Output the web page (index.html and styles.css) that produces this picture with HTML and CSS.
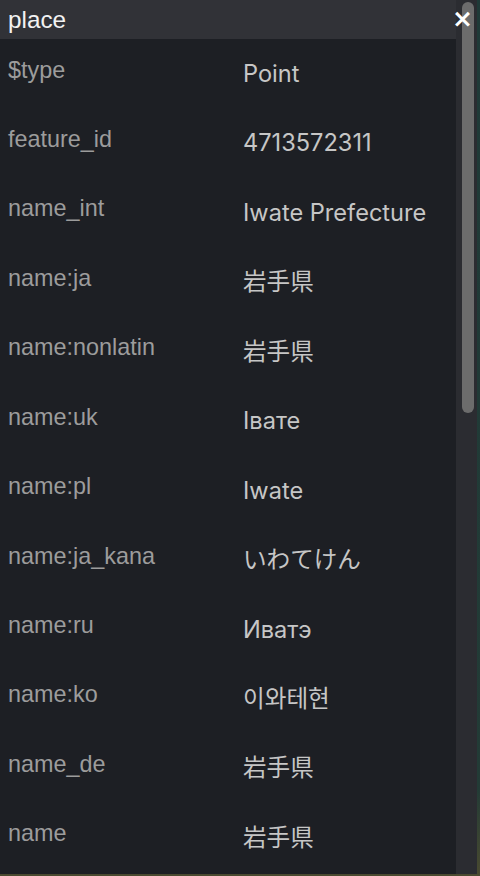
FILE: index.html
```html
<!DOCTYPE html>
<html lang="en">
<head>
<meta charset="utf-8">
<title>place</title>
<link rel="stylesheet" href="styles.css">
</head>
<body>
<div class="popup">
  <div class="panel">
    <div class="header"><span class="title">place</span></div>
    <div class="props">
      <div class="key">$type</div><div class="val">Point</div>
      <div class="key">feature_id</div><div class="val">4713572311</div>
      <div class="key">name_int</div><div class="val">Iwate Prefecture</div>
      <div class="key">name:ja</div><div class="val" lang="ja">岩手県</div>
      <div class="key">name:nonlatin</div><div class="val" lang="ja">岩手県</div>
      <div class="key">name:uk</div><div class="val">Івате</div>
      <div class="key">name:pl</div><div class="val">Iwate</div>
      <div class="key">name:ja_kana</div><div class="val" lang="ja">いわてけん</div>
      <div class="key">name:ru</div><div class="val">Иватэ</div>
      <div class="key">name:ko</div><div class="val" lang="ko">이와테현</div>
      <div class="key">name_de</div><div class="val" lang="ja">岩手県</div>
      <div class="key">name</div><div class="val" lang="ja">岩手県</div>
    </div>
  </div>
  <div class="scrollbar"><div class="thumb"></div></div>
  <button class="close" type="button" aria-label="Close">×</button>
</div>
</body>
</html>
```
FILE: styles.css
```css
html, body {
  margin: 0;
  padding: 0;
}
body {
  width: 480px;
  height: 876px;
  overflow: hidden;
  background: linear-gradient(180deg, #1f3a38 0%, #233b36 90%, #4a4a30 100%);
}
.popup {
  position: relative;
  display: flex;
  width: 477px;
  height: 874px;
}
.panel {
  width: 456px;
  height: 874px;
  overflow: hidden;
  background: #1d1f24;
  display: flex;
  flex-direction: column;
}
.header {
  height: 39px;
  flex: none;
  background: #313237;
  box-sizing: border-box;
  padding-left: 8px;
}
.title {
  display: block;
  font-family: "Liberation Sans", Arial, sans-serif;
  font-size: 24.3px;
  line-height: 24px;
  padding-top: 8px;
  color: #f2f2f2;
}
.props {
  display: grid;
  grid-template-columns: 235px 1fr;
  grid-auto-rows: 69.45px;
  padding-left: 8px;
}
.key {
  font-family: "Liberation Sans", Arial, sans-serif;
  font-size: 23.4px;
  line-height: 24px;
  padding-top: 18.5px;
  color: #9c9c9c;
  white-space: nowrap;
}
.val {
  font-family: Inter, "Noto Sans CJK JP", "Noto Sans CJK KR", sans-serif;
  font-size: 23.6px;
  line-height: 28px;
  padding-top: 21px;
  color: #c6c6c6;
  white-space: nowrap;
}
.val:lang(ko) {
  font-family: Inter, "Noto Sans CJK KR", sans-serif;
}
.scrollbar {
  width: 21px;
  height: 874px;
  background: #2b2c31;
  box-sizing: border-box;
  padding: 2px 3px 0 6px;
}
.thumb {
  width: 12px;
  height: 411px;
  border-radius: 6px;
  background: #6c6c6c;
}
.close {
  position: absolute;
  left: 452px;
  top: 4px;
  margin: 0;
  padding: 0;
  border: 0;
  background: none;
  color: #ffffff;
  font-family: "DejaVu Sans", sans-serif;
  font-weight: bold;
  font-size: 25px;
  line-height: 30px;
  width: 20px;
  text-align: center;
  cursor: pointer;
}
```
